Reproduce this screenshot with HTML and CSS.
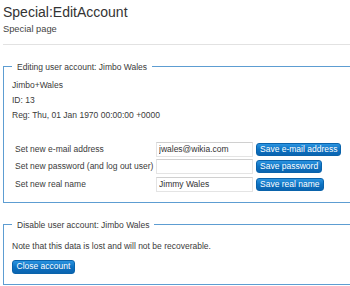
FILE: index.html
```html
<!DOCTYPE html>
<html lang="en">
<head>
    <meta charset="UTF-8">
    <meta name="viewport" content="width=device-width, initial-scale=1.0">
    <title>Special:EditAccount</title>
    <link rel="stylesheet" href="styles.css">
</head>
<body>
    <header class="page-header">
        <h1>Special:EditAccount</h1>
        <div class="subtitle">Special page</div>
    </header>
    <hr class="divider">

    <fieldset class="panel">
        <legend>Editing user account: Jimbo Wales</legend>
        <div class="info">
            <div>Jimbo+Wales</div>
            <div>ID: 13</div>
            <div>Reg: Thu, 01 Jan 1970 00:00:00 +0000</div>
        </div>
        <form class="edit-form">
            <label for="email">Set new e-mail address</label>
            <input type="text" id="email" name="email" value="jwales@wikia.com">
            <div><button type="button" class="btn">Save e-mail address</button></div>

            <label for="pass">Set new password (and log out user)</label>
            <input type="password" id="pass" name="pass">
            <div><button type="button" class="btn">Save password</button></div>

            <label for="realname">Set new real name</label>
            <input type="text" id="realname" name="realname" value="Jimmy Wales">
            <div><button type="button" class="btn">Save real name</button></div>
        </form>
    </fieldset>

    <fieldset class="panel panel-close">
        <legend>Disable user account: Jimbo Wales</legend>
        <p class="note">Note that this data is lost and will not be recoverable.</p>
        <button type="button" class="btn">Close account</button>
    </fieldset>
</body>
</html>
```

FILE: styles.css
```css
html, body { margin: 0; padding: 0; overflow: hidden; }
body { font-family: "Liberation Sans", Arial, sans-serif; font-size: 8.5px; color: #3a3a3a; background: #fff; padding: 0 0 0 3px; }

.page-header { padding-top: 3px; }
h1 { font-size: 14px; font-weight: normal; margin: 0; line-height: 19px; color: #333; }
.subtitle { font-size: 9.3px; line-height: 12px; margin-top: 1px; color: #444; }
.divider { border: none; border-top: 1px solid #e2e2e2; margin: 8.5px 0 0 0; width: 400px; }

.panel { border: 1px solid #5d9dd2; border-right: none; margin: 17px 0 0 0; padding: 0 0 10px 8px; width: 400px; min-width: 0; }
.panel legend { padding: 0 5px; line-height: 10px; font-size: 8.5px; }

.info { margin-top: 6.5px; line-height: 15px; }

.edit-form { display: grid; grid-template-columns: 141px 97px auto; column-gap: 3px; row-gap: 2.5px; margin-top: 18.5px; align-items: center; }
.edit-form label { padding-left: 3px; line-height: 15px; white-space: nowrap; }
.edit-form input { box-sizing: border-box; height: 15px; width: 97px; margin: 0; padding: 0 2px; border: 1px solid #e4e4e4; border-top-color: #d0d0d0; font-family: inherit; font-size: 8.5px; color: #333; }

.btn { box-sizing: border-box; height: 13px; padding: 0 3px; border: 1px solid #0a63ab; border-radius: 3px; background: linear-gradient(#2b94e0, #0d72c2 50%, #0a64b0); color: #fff; font-family: inherit; font-size: 8.5px; line-height: 11px; cursor: pointer; display: block; }
.btn:hover { background: #0a64b0; }

.panel-close { padding-bottom: 10px; }
.note { margin: 9.5px 0 0 0; line-height: 15px; }
.panel-close .btn { margin-top: 5.5px; height: 14px; padding: 0 3.5px; }
```
